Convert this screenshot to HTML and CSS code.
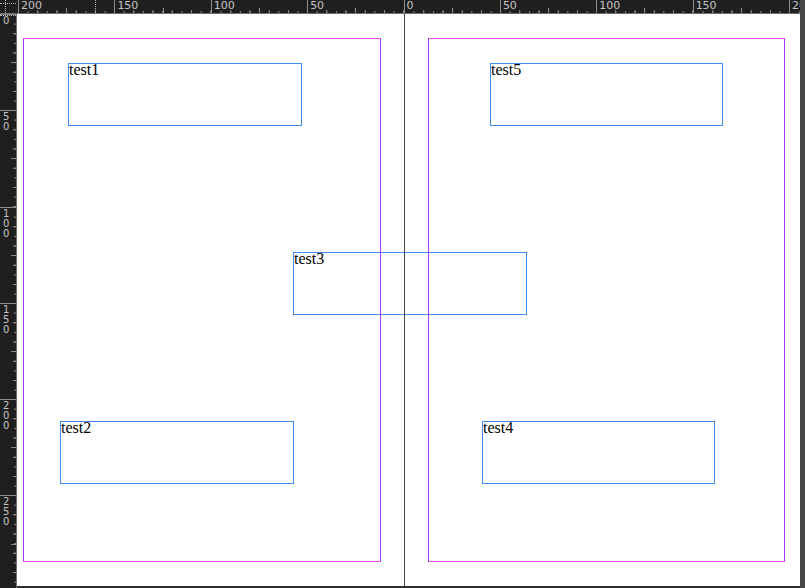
FILE: index.html
```html
<!DOCTYPE html>
<html lang="en">
<head>
<meta charset="utf-8">
<title>Spread</title>
<link rel="stylesheet" href="styles.css">
</head>
<body>
<div class="app">
  <div class="corner"><span class="cx"></span><span class="cy"></span></div>
  <div class="hruler">
    <div class="hseg"><span>200</span></div>
    <div class="hseg"><span>150</span></div>
    <div class="hseg"><span>100</span></div>
    <div class="hseg"><span>50</span></div>
    <div class="hseg"><span>0</span></div>
    <div class="hseg"><span>50</span></div>
    <div class="hseg"><span>100</span></div>
    <div class="hseg"><span>150</span></div>
    <div class="hseg"><span>200</span></div>
    <span class="hcursor"></span>
  </div>
  <div class="vscroll"></div>
  <div class="vruler">
    <div class="vseg"><span>0</span></div>
    <div class="vseg"><span>5</span><span>0</span></div>
    <div class="vseg"><span>1</span><span>0</span><span>0</span></div>
    <div class="vseg"><span>1</span><span>5</span><span>0</span></div>
    <div class="vseg"><span>2</span><span>0</span><span>0</span></div>
    <div class="vseg"><span>2</span><span>5</span><span>0</span></div>
    <div class="vseg"></div>
    <span class="vcursor"></span>
  </div>
  <div class="canvas">
    <div class="frame f1">test1</div>
    <div class="frame f5">test5</div>
    <div class="frame f3">test3</div>
    <div class="frame f2">test2</div>
    <div class="frame f4">test4</div>
    <div class="margin m-left"></div>
    <div class="margin m-right"></div>
    <div class="spine"></div>
  </div>
  <div class="hbar"></div>
</div>
</body>
</html>
```

FILE: styles.css
```css
html, body {
  margin: 0;
  padding: 0;
  background: #1f1f1f;
}

.app {
  display: grid;
  grid-template-columns: 17px 783px 5px;
  grid-template-rows: 14px 572px 2px;
  width: 805px;
  height: 588px;
  overflow: hidden;
}

.corner {
  grid-column: 1;
  grid-row: 1;
  background: #1f1f1f;
  position: relative;
  box-sizing: border-box;
  border-bottom: 1px solid #6e6e6e;
}

.corner .cx {
  position: absolute;
  left: 5px;
  top: 0;
  height: 13px;
  border-left: 1px dotted #b8b8b8;
}

.corner .cy {
  position: absolute;
  left: 0;
  top: 3px;
  width: 16px;
  border-top: 1px dotted #b8b8b8;
}

.hruler {
  grid-column: 2;
  grid-row: 1;
  display: flex;
  padding-left: 1px;
  overflow: hidden;
  background: #1f1f1f;
  border-bottom: 1px solid #6e6e6e;
  box-sizing: border-box;
  position: relative;
}

.hseg {
  flex: 0 0 96.375px;
  height: 13px;
  box-sizing: border-box;
  border-left: 1px solid #8c8c8c;
  background:
    linear-gradient(#8c8c8c, #8c8c8c) 48.19px 100% / 1px 5px no-repeat,
    linear-gradient(to right, #8c8c8c 1px, transparent 1px) 0 100% / 19.275px 3px repeat-x,
    linear-gradient(to right, #8c8c8c 1px, transparent 1px) 0 100% / 9.6375px 2px repeat-x;
  background-origin: border-box;
}

.hseg span {
  display: block;
  padding-left: 2px;
  font-family: "DejaVu Sans", sans-serif;
  font-size: 11px;
  line-height: 11px;
  color: #c4c4c4;
}

.hcursor {
  position: absolute;
  left: 78px;
  top: 0;
  height: 13px;
  border-left: 1px dotted #b8b8b8;
}

.vscroll {
  grid-column: 3;
  grid-row: 1 / 4;
  background: #474747;
}

.vruler {
  grid-column: 1;
  grid-row: 2 / 4;
  display: flex;
  flex-direction: column;
  overflow: hidden;
  background: #1f1f1f;
  border-right: 1px solid #6e6e6e;
  box-sizing: border-box;
  position: relative;
}

.vseg {
  flex: 0 0 96.3px;
  box-sizing: border-box;
  border-top: 1px solid #8c8c8c;
  padding: 1px 0 0 3px;
  background:
    linear-gradient(#8c8c8c, #8c8c8c) 100% 48.15px / 5px 1px no-repeat,
    linear-gradient(to bottom, #8c8c8c 1px, transparent 1px) 100% 0 / 3px 19.26px repeat-y,
    linear-gradient(to bottom, #8c8c8c 1px, transparent 1px) 100% 0 / 2px 9.63px repeat-y;
  background-origin: border-box;
}

.vseg span {
  display: block;
  font-family: "DejaVu Sans", sans-serif;
  font-size: 10px;
  line-height: 10px;
  color: #c4c4c4;
}

.vcursor {
  position: absolute;
  left: 0;
  top: 1px;
  width: 16px;
  border-top: 1px dotted #b8b8b8;
}

.canvas {
  grid-column: 2;
  grid-row: 2;
  position: relative;
  background: #ffffff;
  overflow: hidden;
}

.hbar {
  grid-column: 2;
  grid-row: 3;
  background: #2e2e2e;
}

.frame {
  position: absolute;
  width: 234px;
  height: 63px;
  box-sizing: border-box;
  border: 1px solid #3f8cf6;
  font-family: "Liberation Serif", "Times New Roman", serif;
  font-size: 16px;
  line-height: 12px;
  color: #000000;
}

.f1 { left: 51px; top: 49px; }
.f5 { left: 473px; top: 49px; width: 233px; }
.f3 { left: 276px; top: 238px; }
.f2 { left: 43px; top: 407px; }
.f4 { left: 465px; top: 407px; width: 233px; }

.margin {
  position: absolute;
  top: 24px;
  height: 524px;
  box-sizing: border-box;
  border-top: 1px solid #ff40ff;
  border-bottom: 1px solid #ff40ff;
  border-left: 1px solid #a03cff;
  border-right: 1px solid #a03cff;
}

.m-left { left: 6px; width: 358px; }
.m-right { left: 411px; width: 357px; }

.spine {
  position: absolute;
  left: 387px;
  top: 0;
  bottom: 0;
  width: 1px;
  background: #444444;
}
```
